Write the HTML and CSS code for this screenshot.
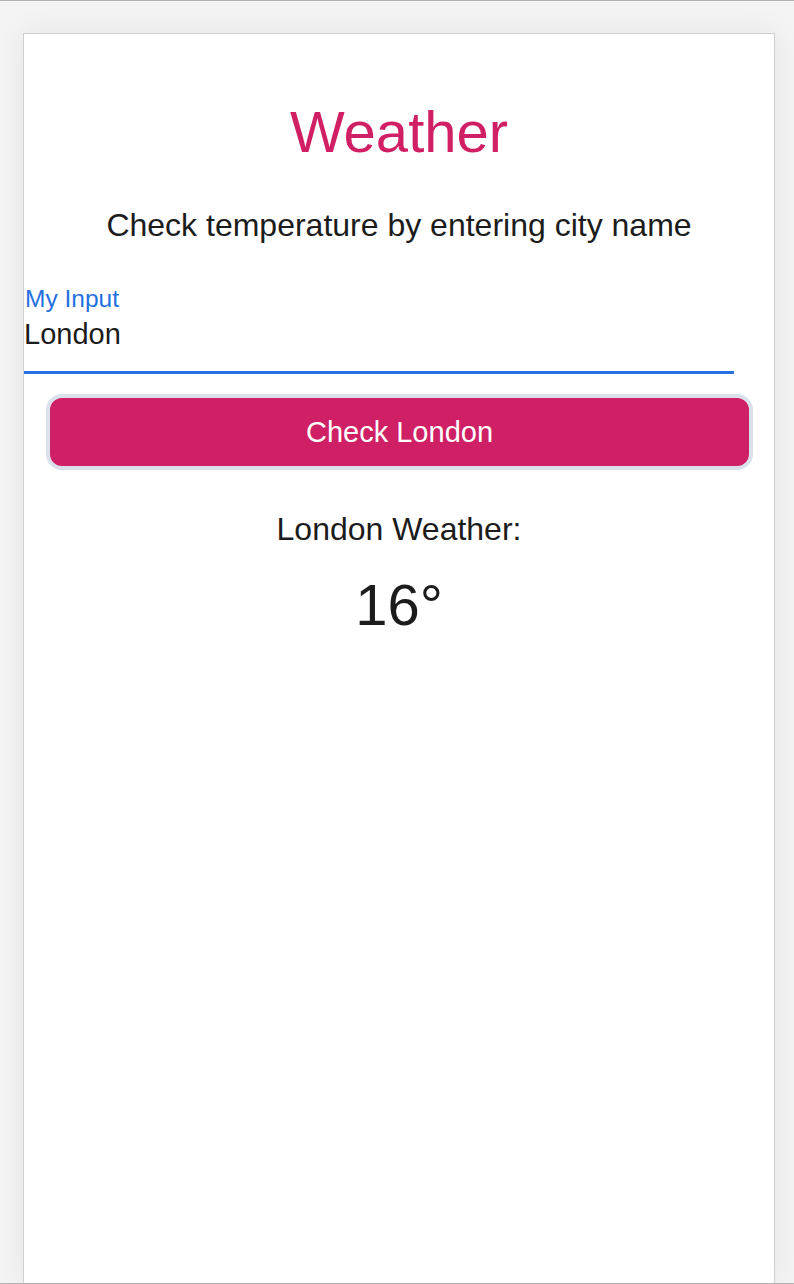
FILE: index.html
```html
<!DOCTYPE html>
<html lang="en">
<head>
    <meta charset="UTF-8">
    <meta name="viewport" content="width=device-width, initial-scale=1.0">
    <title>Weather</title>
    <link rel="stylesheet" href="styles.css">
</head>
<body>

    <div class="device">
        <h1 class="title">Weather</h1>
        <p class="subtitle">Check temperature by entering city name</p>

        <div class="field">
            <label class="field-label" for="city">My Input</label>
            <input class="field-input" type="text" id="city" value="London">
        </div>

        <button class="check-btn">Check London</button>

        <div class="result">
            <div class="result-city">London Weather:</div>
            <div class="result-temp">16°</div>
        </div>
    </div>

</body>
</html>
```

FILE: styles.css
```css
html, body {
    height: 100%;
}
body {
    margin: 0;
    font-family: "Liberation Sans", Arial, sans-serif;
    background-color: #f4f4f4;
    border-top: 1px solid #b3b3b3;
    border-bottom: 1px solid #b3b3b3;
    box-sizing: border-box;
    display: flex;
    flex-direction: column;
    overflow: hidden;
}
.device {
    flex: 1;
    margin: 32px 19px 0 23px;
    background-color: #fff;
    border: 1px solid #cfcfcf;
    border-bottom: none;
    box-shadow: 0 0 30px rgba(0, 0, 0, 0.07);
    color: #1c1c1c;
}
.title {
    margin: 58px 0 0;
    text-align: center;
    font-size: 58px;
    font-weight: normal;
    line-height: 80px;
    color: #d01f65;
}
.subtitle {
    margin: 33px 0 0;
    text-align: center;
    font-size: 32px;
    line-height: 40px;
}
.field {
    margin-top: 41px;
    width: 710px;
    border-bottom: 3px solid #2470e0;
    padding-bottom: 21px;
}
.field-label {
    display: block;
    color: #2470e0;
    font-size: 24.5px;
    line-height: 26px;
    padding-left: 1px;
}
.field-input {
    display: block;
    width: 100%;
    border: none;
    outline: none;
    padding: 0;
    margin-top: 6px;
    font-family: inherit;
    font-size: 29px;
    line-height: 32px;
    color: #1c1c1c;
    background: transparent;
}
.check-btn {
    display: block;
    width: 707px;
    height: 76px;
    margin: 20px 0 0 22px;
    background-color: #cf1f65;
    color: #fff;
    border: 4px solid #dce0ea;
    border-radius: 16px;
    font-family: inherit;
    font-size: 29px;
    cursor: pointer;
}
.result {
    text-align: center;
    margin-top: 41px;
}
.result-city {
    font-size: 32px;
    line-height: 36px;
}
.result-temp {
    font-size: 58px;
    line-height: 70px;
    margin-top: 23px;
}
```
